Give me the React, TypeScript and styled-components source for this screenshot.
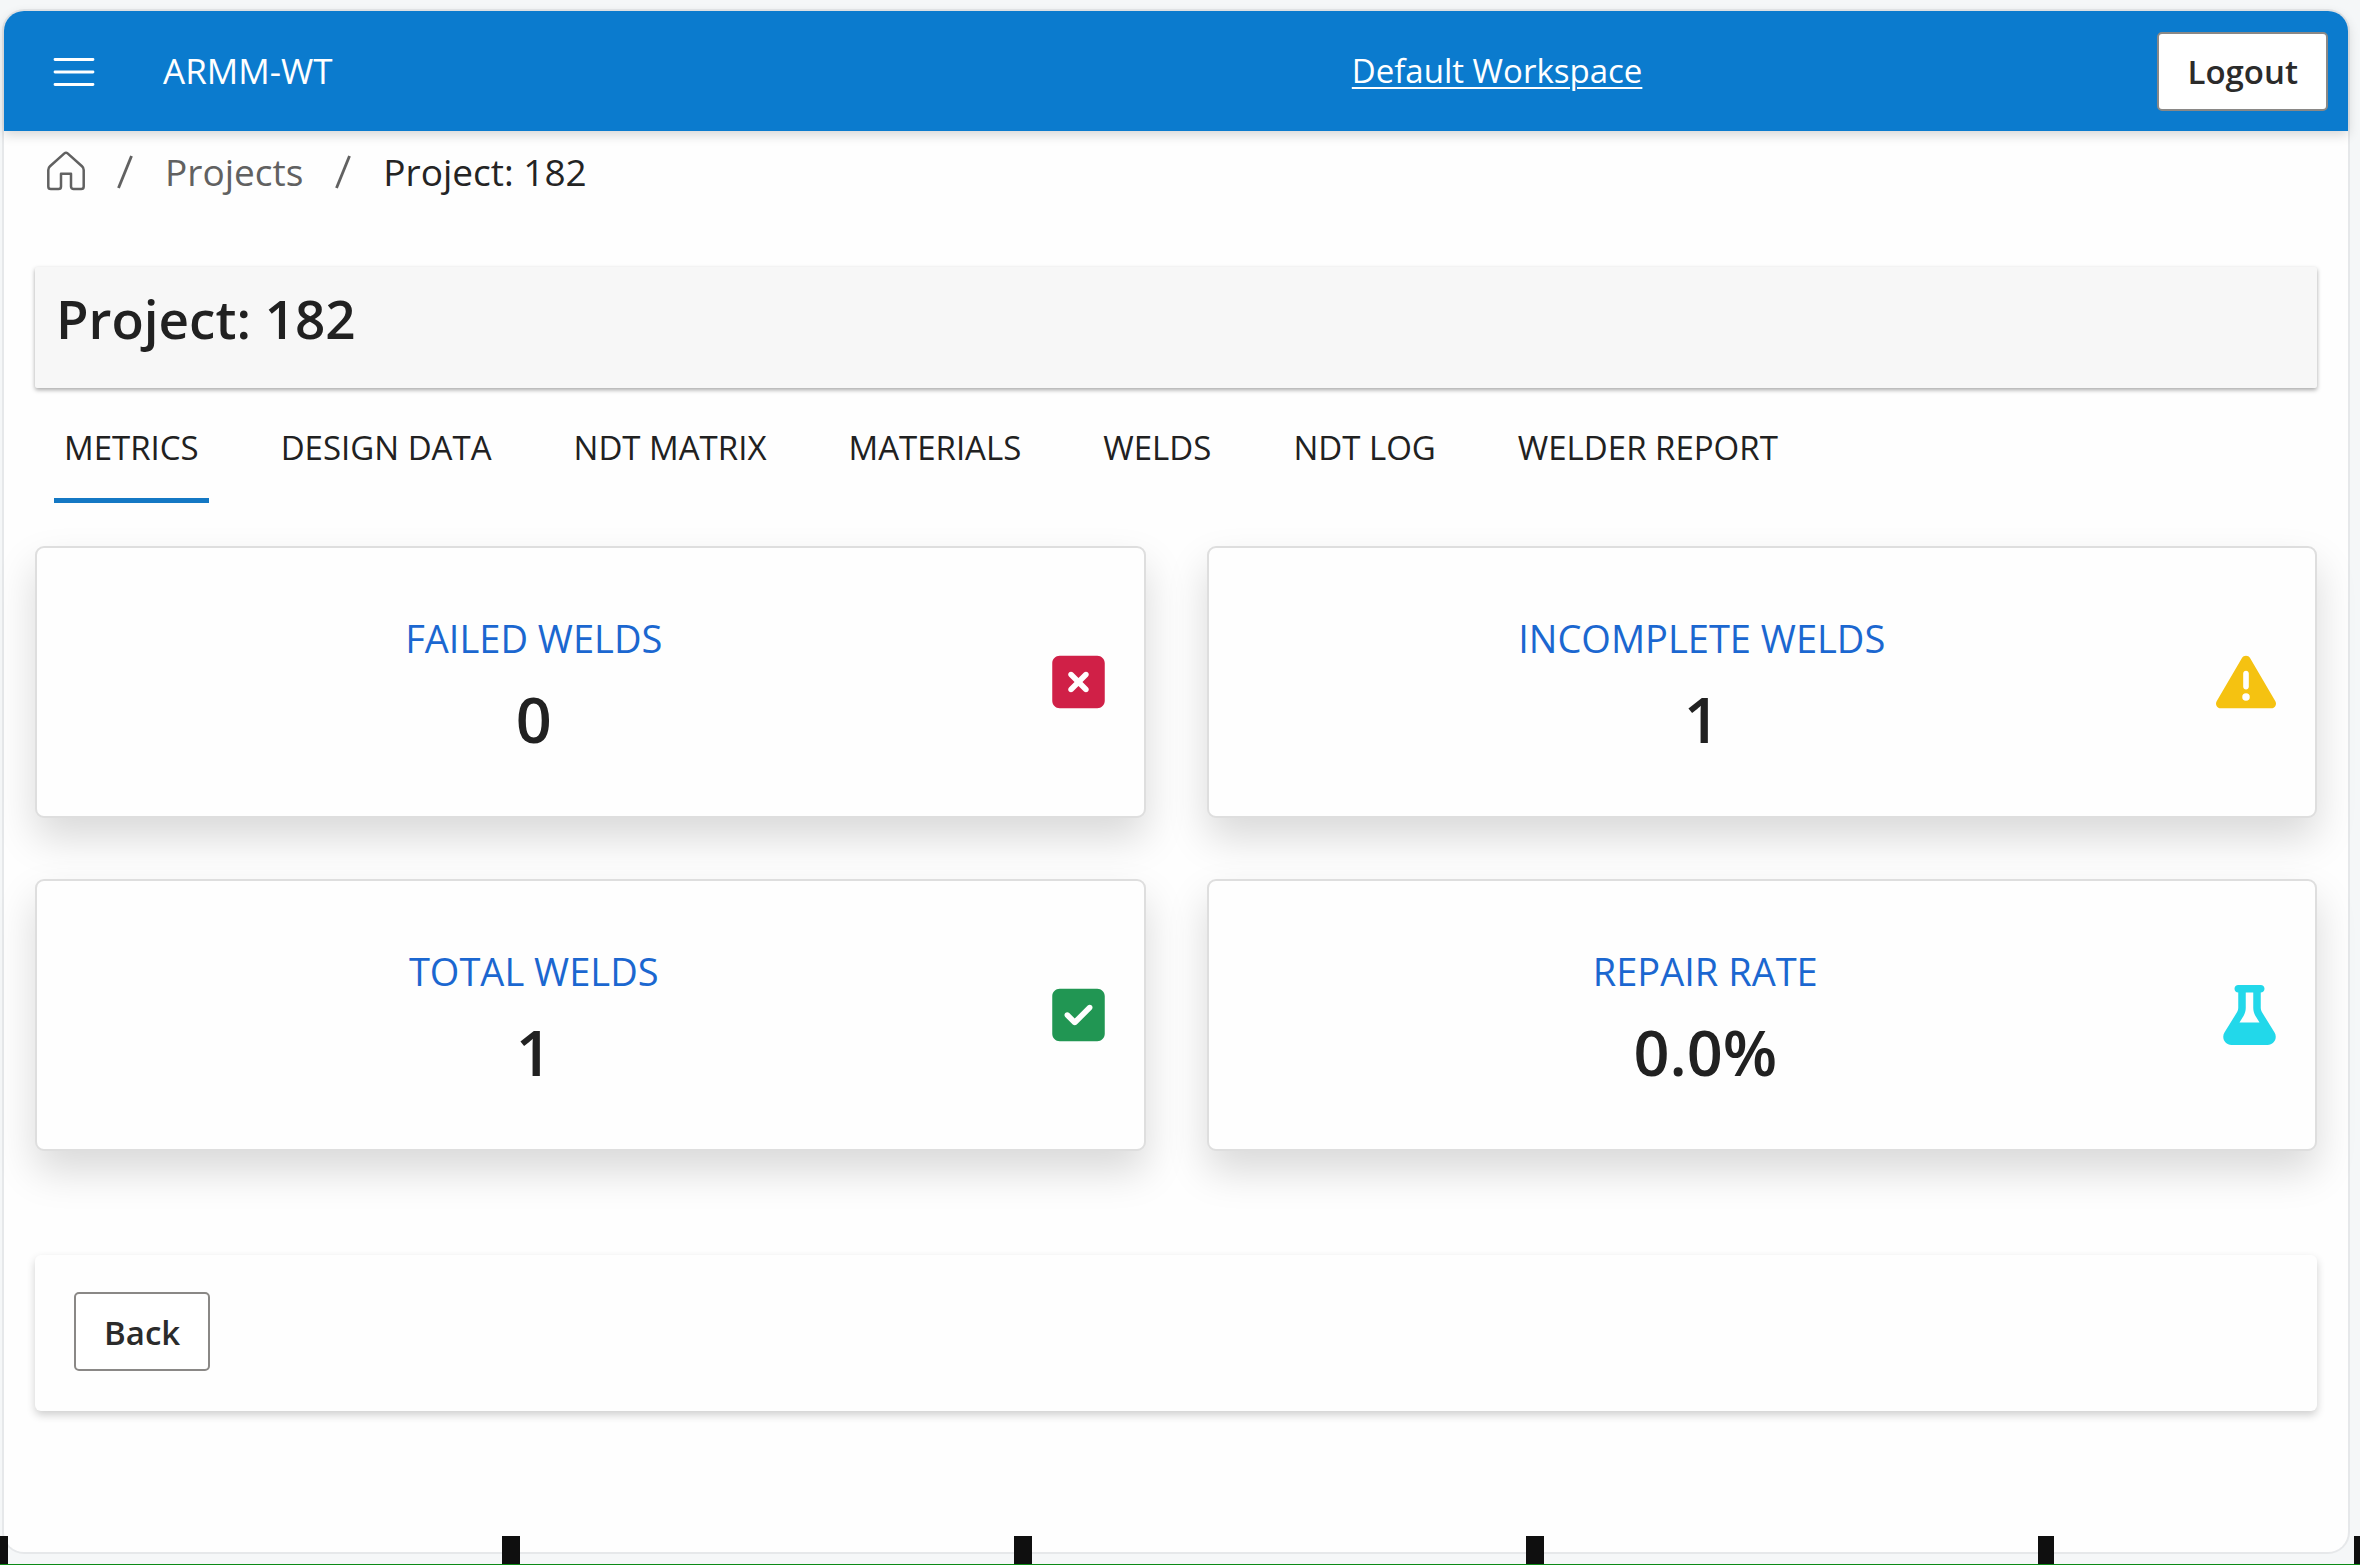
import React from "react";
import styled, { createGlobalStyle } from "styled-components";
import {
  FaFlask,
  FaSquareCheck,
  FaSquareXmark,
  FaTriangleExclamation,
} from "react-icons/fa6";

const GlobalStyle = createGlobalStyle`
  *, *::before, *::after { box-sizing: border-box; }
  body {
    margin: 0;
    background: #f5f7f8;
    color: #212121;
    font-family: "Segoe UI", "Open Sans", "Noto Sans", sans-serif;
  }
  button { font-family: inherit; cursor: pointer; }
`;

const Page = styled.div`
  position: relative;
  display: flex;
  flex-direction: column;
  min-height: 100vh;
  padding: 11px 12px 13px 4px;
`;

const Frame = styled.div`
  flex: 1;
  display: flex;
  flex-direction: column;
  background: #fefefe;
  border-radius: 20px;
  box-shadow: 0 0 0 2px #e6e8ea;
`;

const TopBar = styled.header`
  display: flex;
  align-items: center;
  height: 120px;
  background: #0b7bce;
  color: #fff;
  font-size: 33px;
  line-height: 44px;
  border-radius: 20px 20px 0 0;
  box-shadow: 0 4px 12px rgba(0, 0, 0, 0.16);
`;

const Brand = styled.div`
  display: flex;
  align-items: center;
  gap: 68px;
  width: 57.5%;
  padding-left: 49px;
  font-size: 35px;
`;

const MenuButton = styled.button`
  display: flex;
  padding: 0;
  border: 0;
  background: none;
  color: inherit;
`;

const WorkspaceLink = styled.a`
  color: inherit;
  text-decoration: underline;
  text-decoration-thickness: 2px;
  text-underline-offset: 4px;
`;

const OutlineButton = styled.button`
  height: 79px;
  padding: 2px 28px 0;
  border: 2px solid #8a8886;
  border-radius: 5px;
  background: #fff;
  color: #2b2b2b;
  font-size: 33px;
  font-weight: 600;
  line-height: 44px;
`;

const LogoutButton = styled(OutlineButton)`
  margin-left: auto;
  margin-right: 20px;
`;

const Breadcrumb = styled.nav`
  padding-left: 43px;

  ol {
    display: flex;
    align-items: center;
    gap: 32px;
    height: 82px;
    margin: 0;
    padding: 0;
    list-style: none;
    font-size: 37px;
    line-height: 48px;
    color: #616161;
  }

  li,
  a {
    display: flex;
    color: inherit;
    text-decoration: none;
  }

  li[aria-current] {
    color: #242424;
  }
`;

const Main = styled.main`
  padding: 54px 31px 0;
`;

const TitlePanel = styled.div`
  height: 121px;
  padding: 16px 21px;
  background: #f7f7f7;
  border-radius: 2px;
  box-shadow: 0 2px 4px rgba(0, 0, 0, 0.34);

  h1 {
    margin: 0;
    font-size: 53px;
    font-weight: 600;
    line-height: 72px;
  }
`;

const Tabs = styled.div`
  display: flex;
  gap: 62px;
  margin-top: 12px;
  padding-left: 19px;
`;

const Tab = styled.button<{ $active: boolean }>`
  padding: 26px 10px 28px;
  border: 0;
  border-bottom: 5px solid ${(p) => (p.$active ? "#1478c4" : "transparent")};
  background: none;
  color: #212121;
  font-size: 33px;
  line-height: 44px;
  white-space: nowrap;
`;

const Cards = styled.section`
  display: grid;
  grid-template-columns: 1fr 1fr;
  gap: 61px;
  margin-top: 43px;
`;

const Card = styled.article`
  display: flex;
  align-items: center;
  gap: 60px;
  padding: 0 39px;
  background: #fefefe;
  border: 2px solid #dedede;
  border-radius: 9px;
  box-shadow: 0 20px 40px rgba(0, 0, 0, 0.15);
`;

const CardText = styled.div`
  flex: 1;
  padding: 50px 0 56px;
  text-align: center;

  h2 {
    margin: 0;
    color: #1b67d0;
    font-size: 38px;
    font-weight: 400;
    line-height: 80px;
  }

  p {
    margin: 0;
    font-size: 63px;
    font-weight: 600;
    line-height: 82px;
  }
`;

const CardIcon = styled.div<{ $color: string; $width: number }>`
  display: flex;
  color: ${(p) => p.$color};

  svg {
    width: ${(p) => p.$width}px;
    height: 60px;
  }
`;

const Actions = styled.div`
  margin-top: 104px;
  padding: 37px 39px 40px;
  border-radius: 6px;
  background: #fefefe;
  box-shadow: 0 4px 9px rgba(0, 0, 0, 0.19);
`;

const TickStrip = styled.div`
  position: absolute;
  right: 0;
  bottom: 0;
  left: 0;
  display: flex;
  gap: 494px;
  height: 29px;
  overflow: hidden;
  border-bottom: 1px solid #0b8a16;
`;

const Tick = styled.span<{ $width: number }>`
  flex: none;
  width: ${(p) => p.$width}px;
  background: #0f0f0f;

  &:last-child {
    margin-left: -194px;
  }
`;

const MenuIcon = () => (
  <svg width="42" height="32" viewBox="0 0 42 32" fill="none" stroke="currentColor" strokeWidth="2.8" strokeLinecap="round" aria-hidden="true">
    <path d="M2 4.500H40M2 17H40M2 29.500H40" />
  </svg>
);

const HomeIcon = () => (
  <svg width="38" height="42" viewBox="0 0 38 42" fill="none" stroke="currentColor" strokeWidth="2.5" strokeLinejoin="round" aria-hidden="true">
    <path d="M17.4 2.4a2.4 2.4 0 0 1 3.2 0L35 15.3a5 5 0 0 1 1.7 3.7V35.5a2.6 2.6 0 0 1-2.6 2.6H26.6A2.6 2.6 0 0 1 24 35.500V22.700H14V35.500A2.600 2.600 0 0 1 11.400 38.100H3.900A2.600 2.600 0 0 1 1.300 35.500V19A5 5 0 0 1 3 15.300Z" />
  </svg>
);

const SlashIcon = () => (
  <svg width="16" height="34" viewBox="0 0 16 34" fill="none" stroke="currentColor" strokeWidth="2.8">
    <path d="M14.500 1L1.500 33" />
  </svg>
);

const tabs = ["METRICS", "DESIGN DATA", "NDT MATRIX", "MATERIALS", "WELDS", "NDT LOG", "WELDER REPORT"];

const metrics = [
  { label: "FAILED WELDS", value: "0", color: "#d02047", width: 53, Icon: FaSquareXmark },
  { label: "INCOMPLETE WELDS", value: "1", color: "#f5c211", width: 60, Icon: FaTriangleExclamation },
  { label: "TOTAL WELDS", value: "1", color: "#219653", width: 53, Icon: FaSquareCheck },
  { label: "REPAIR RATE", value: "0.0%", color: "#22d8ea", width: 53, Icon: FaFlask },
];

const ticks = [8, 18, 18, 18, 16, 6];

export default function App() {
  const [active, setActive] = React.useState("METRICS");

  return (
    <Page>
      <GlobalStyle />
      <Frame>
        <TopBar>
          <Brand>
            <MenuButton type="button" aria-label="Menu">
              <MenuIcon />
            </MenuButton>
            <span>ARMM-WT</span>
          </Brand>
          <WorkspaceLink href="#workspace">Default Workspace</WorkspaceLink>
          <LogoutButton type="button">Logout</LogoutButton>
        </TopBar>
        <Breadcrumb aria-label="Breadcrumb">
          <ol>
            <li>
              <a href="#home" aria-label="Home">
                <HomeIcon />
              </a>
            </li>
            <li aria-hidden="true">
              <SlashIcon />
            </li>
            <li>
              <a href="#projects">Projects</a>
            </li>
            <li aria-hidden="true">
              <SlashIcon />
            </li>
            <li aria-current="page">Project: 182</li>
          </ol>
        </Breadcrumb>
        <Main>
          <TitlePanel>
            <h1>Project: 182</h1>
          </TitlePanel>
          <Tabs role="tablist">
            {tabs.map((name) => (
              <Tab
                key={name}
                type="button"
                role="tab"
                aria-selected={name === active}
                $active={name === active}
                onClick={() => setActive(name)}
              >
                {name}
              </Tab>
            ))}
          </Tabs>
          <Cards>
            {metrics.map(({ label, value, color, width, Icon }) => (
              <Card key={label}>
                <CardText>
                  <h2>{label}</h2>
                  <p>{value}</p>
                </CardText>
                <CardIcon $color={color} $width={width}>
                  <Icon aria-hidden="true" />
                </CardIcon>
              </Card>
            ))}
          </Cards>
          <Actions>
            <OutlineButton type="button">Back</OutlineButton>
          </Actions>
        </Main>
      </Frame>
      <TickStrip aria-hidden="true">
        {ticks.map((width, i) => (
          <Tick key={i} $width={width} />
        ))}
      </TickStrip>
    </Page>
  );
}
